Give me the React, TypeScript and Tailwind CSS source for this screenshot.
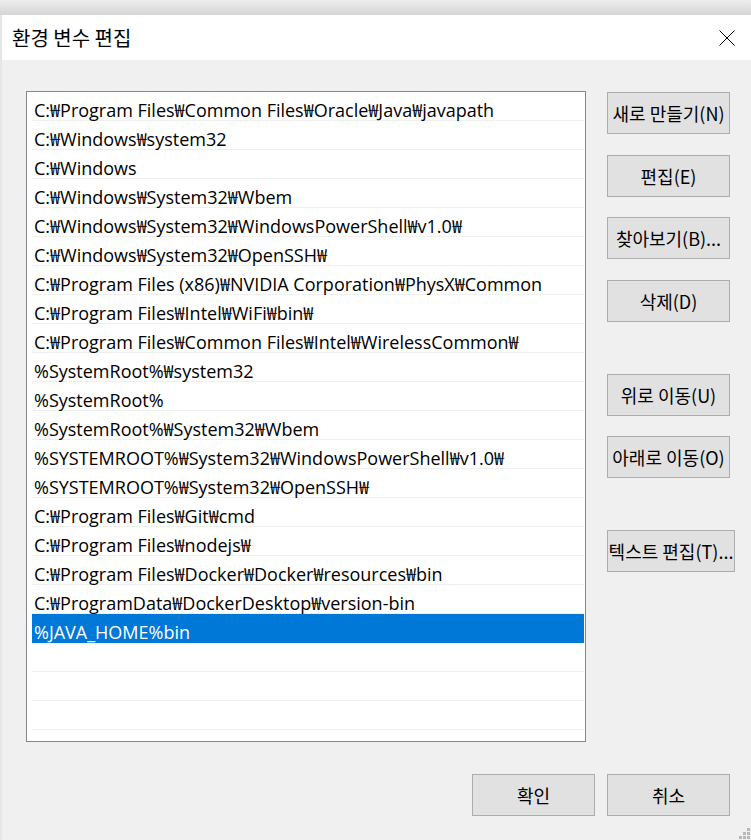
const PATHS = [
  'C:₩Program Files₩Common Files₩Oracle₩Java₩javapath',
  'C:₩Windows₩system32',
  'C:₩Windows',
  'C:₩Windows₩System32₩Wbem',
  'C:₩Windows₩System32₩WindowsPowerShell₩v1.0₩',
  'C:₩Windows₩System32₩OpenSSH₩',
  'C:₩Program Files (x86)₩NVIDIA Corporation₩PhysX₩Common',
  'C:₩Program Files₩Intel₩WiFi₩bin₩',
  'C:₩Program Files₩Common Files₩Intel₩WirelessCommon₩',
  '%SystemRoot%₩system32',
  '%SystemRoot%',
  '%SystemRoot%₩System32₩Wbem',
  '%SYSTEMROOT%₩System32₩WindowsPowerShell₩v1.0₩',
  '%SYSTEMROOT%₩System32₩OpenSSH₩',
  'C:₩Program Files₩Git₩cmd',
  'C:₩Program Files₩nodejs₩',
  'C:₩Program Files₩Docker₩Docker₩resources₩bin',
  'C:₩ProgramData₩DockerDesktop₩version-bin',
  '%JAVA_HOME%bin',
];

const SELECTED = 18;
const EMPTY_ROWS = 4;

const UI_FONT = { fontFamily: '"Open Sans", "Noto Sans CJK KR", sans-serif' };
const KO_FONT = { fontFamily: '"Noto Sans CJK KR", "Open Sans", sans-serif' };

function Button({ label, className = '' }: { label: string; className?: string }) {
  return (
    <button
      className={`h-[42px] border border-[#adadad] bg-[#e1e1e1] text-[18px] leading-none text-black flex items-center justify-center whitespace-nowrap ${className}`}
    >
      {label}
    </button>
  );
}

function ResizeGrip() {
  const dots = [
    [8, 0],
    [4, 4],
    [8, 4],
    [0, 8],
    [4, 8],
    [8, 8],
  ];
  return (
    <svg width="11" height="11" className="absolute right-[1px] bottom-[1px]">
      {dots.map(([x, y]) => (
        <rect key={`${x}-${y}`} x={x} y={y} width="3" height="3" fill="#b8b8b8" />
      ))}
    </svg>
  );
}

export default function App() {
  return (
    <div
      className="w-[751px] h-[840px] bg-[#f0f0f0] relative overflow-hidden flex flex-col"
      style={UI_FONT}
    >
      {/* shadow of window behind */}
      <div className="h-[15px] shrink-0 bg-gradient-to-b from-[#ededed] to-[#d6d6d6]" />

      <div className="flex flex-1">
        <div className="w-[2px] shrink-0 bg-[#e6e6e6]" />

        <div className="flex-1 flex flex-col">
          {/* title bar */}
          <div className="h-[45px] bg-white flex items-center justify-between pl-[10px] pr-[16px]">
            <span className="text-[20px] text-black" style={KO_FONT}>
              환경 변수 편집
            </span>
            <svg width="16" height="16" viewBox="0 0 16 16">
              <path d="M0.5 0.5 L15.5 15.5 M15.5 0.5 L0.5 15.5" stroke="#000" strokeWidth="1" fill="none" />
            </svg>
          </div>

          {/* body */}
          <div className="flex pt-[31px] pl-[24px]">
            <div className="w-[560px] h-[651px] border border-[#828790] bg-white pl-[5px] pr-[1px] overflow-hidden">
              {PATHS.map((p, i) => (
                <div
                  key={p}
                  className={`h-[29px] flex items-center pt-[7px] pl-[2px] text-[18px] leading-none whitespace-nowrap ${
                    i === SELECTED
                      ? 'bg-[#0078d7] text-white'
                      : 'border-b border-[#efefef] text-black'
                  }`}
                >
                  {p}
                </div>
              ))}
              {Array.from({ length: EMPTY_ROWS }).map((_, i) => (
                <div key={i} className="h-[29px] border-b border-[#efefef]" />
              ))}
            </div>

            <div className="flex flex-col pl-[21px] pt-[1px]" style={KO_FONT}>
              <Button label="새로 만들기(N)" className="w-[123px]" />
              <Button label="편집(E)" className="w-[123px] mt-[21px]" />
              <Button label="찾아보기(B)..." className="w-[123px] mt-[20px]" />
              <Button label="삭제(D)" className="w-[123px] mt-[21px]" />
              <Button label="위로 이동(U)" className="w-[123px] mt-[52px]" />
              <Button label="아래로 이동(O)" className="w-[123px] mt-[20px]" />
              <Button label="텍스트 편집(T)..." className="w-[128px] mt-[52px]" />
            </div>
          </div>

          <div className="flex justify-end gap-[12px] pr-[21px] pt-[32px]" style={KO_FONT}>
            <Button label="확인" className="w-[123px]" />
            <Button label="취소" className="w-[123px]" />
          </div>
        </div>
      </div>

      <ResizeGrip />
    </div>
  );
}
